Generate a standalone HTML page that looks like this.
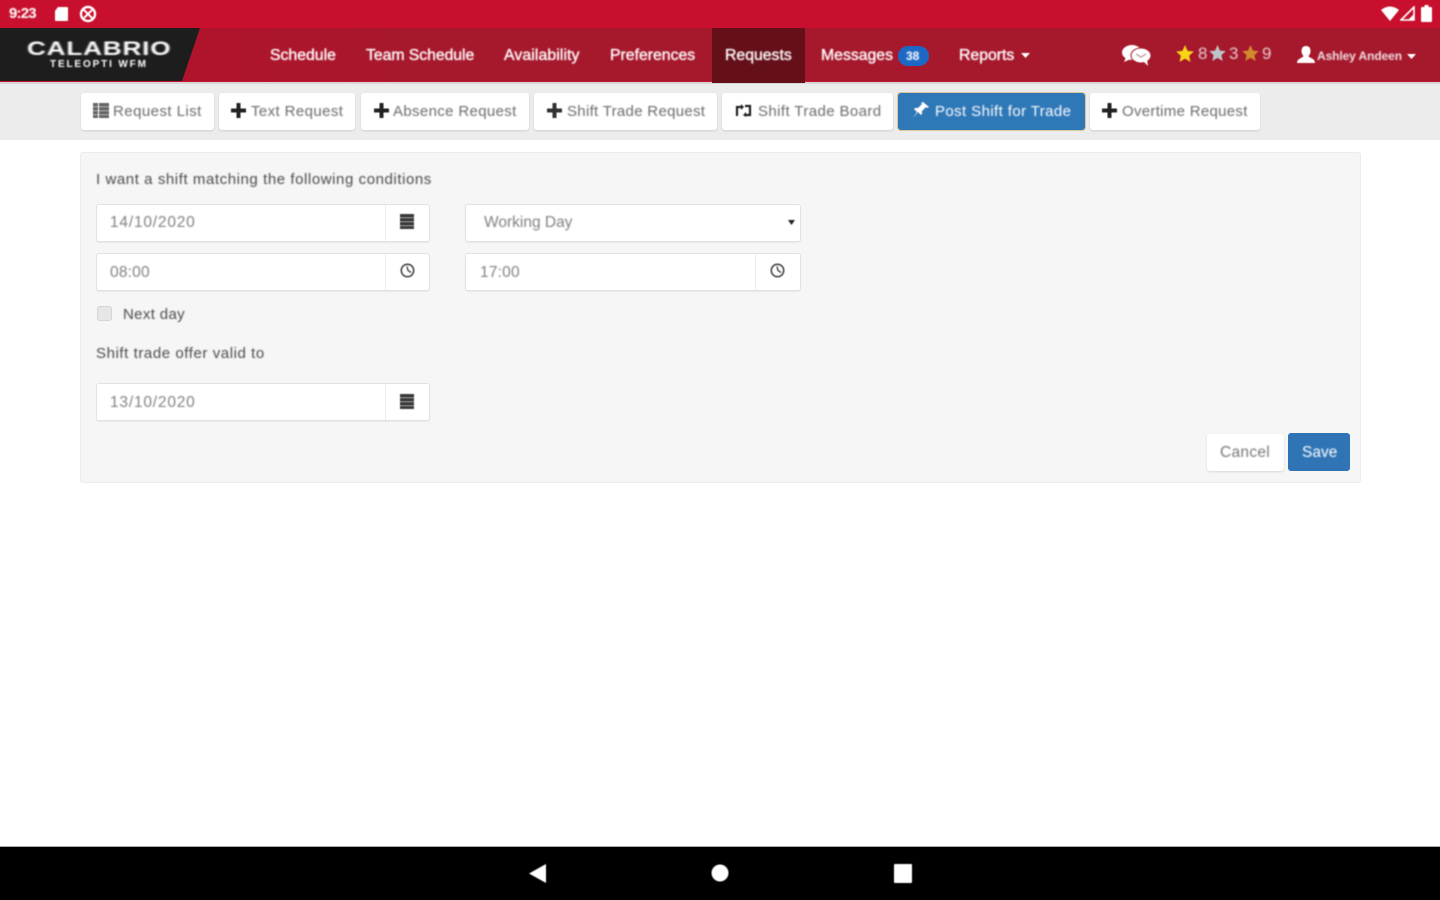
<!DOCTYPE html>
<html><head><meta charset="utf-8"><title>Post Shift for Trade</title>
<style>
html,body{margin:0;padding:0;background:#fff}
#p{position:relative;width:1440px;height:900px;overflow:hidden;font-family:"Liberation Sans",sans-serif;background:#fff}
#p div,#p span.a,#p svg{position:absolute}
.t{position:absolute;white-space:nowrap;filter:blur(.7px)}
#p svg{filter:blur(.5px)}
.nav{color:#fff;font-size:15.8px;top:46px;line-height:20px;-webkit-text-stroke:.35px #fff}
.btn{position:absolute;top:93px;height:37px;background:#fff;border-radius:3px;box-shadow:0 1px 2px rgba(0,0,0,.12)}
.bt{color:#6a6a6a;font-size:15px;top:102px;line-height:20px;letter-spacing:.3px}
.lab{color:#4a4a4a;font-size:15px;line-height:20px}
.inp{position:absolute;background:#fff;border:1px solid #e2e2e2;border-radius:3px;box-sizing:border-box;height:38px;box-shadow:0 1px 1px rgba(0,0,0,.06)}
.sep{position:absolute;top:0;bottom:0;width:1px;background:#ececec}
.v{color:#808080;font-size:15.5px;line-height:20px;letter-spacing:.2px}
.d{letter-spacing:.8px}
</style></head><body><div id="p">
<div style="left:0;top:0;width:1440px;height:28px;background:#c8102e"></div>
<div style="left:0;top:28px;width:1440px;height:53px;background:linear-gradient(90deg,#b0142d 190px,#a6182c 420px,#a6182c 100%)"></div>
<div style="left:0;top:81px;width:1440px;height:1px;background:#c8102e"></div>
<div style="left:0;top:82px;width:1440px;height:58px;background:#ececec"></div>
<div style="left:0;top:82px;width:1440px;height:2px;background:#d6d6d6"></div>

<!-- status bar -->
<span class="t" style="left:9px;top:5px;color:#fff;font-size:15px;line-height:18px;font-weight:bold;letter-spacing:-.8px">9:23</span>
<svg style="left:54px;top:6px" width="15" height="16" viewBox="0 0 15 16"><path d="M4 1h9a1 1 0 0 1 1 1v12a1 1 0 0 1-1 1H2a1 1 0 0 1-1-1V5z" fill="#fff"/></svg>
<svg style="left:79px;top:5px" width="18" height="18" viewBox="0 0 18 18"><circle cx="9" cy="9" r="7" fill="none" stroke="#fff" stroke-width="2.4"/><path d="M4 4l10 10M13 5l-8 8" stroke="#fff" stroke-width="2"/></svg>
<svg style="left:1381px;top:6px" width="18" height="15" viewBox="0 0 18 15"><path d="M0 4Q9-3 18 4L9 15z" fill="#fff"/></svg>
<svg style="left:1400px;top:6px" width="15" height="15" viewBox="0 0 15 15"><path d="M1 14L14 1v13z" fill="none" stroke="#fff" stroke-width="1.6"/><path d="M8 14L14 8v6z" fill="#fff"/></svg>
<svg style="left:1421px;top:5px" width="11" height="17" viewBox="0 0 11 17"><path d="M3.5 0h4v2H10a1 1 0 0 1 1 1v13a1 1 0 0 1-1 1H1a1 1 0 0 1-1-1V3a1 1 0 0 1 1-1h2.500z" fill="#fff"/></svg>

<!-- logo -->
<svg style="left:0;top:28px;filter:none" width="202" height="54" viewBox="0 0 202 54"><path d="M0 0H200L182 53H0z" fill="#1d1d1d"/></svg>
<span class="t" style="left:27px;top:37px;color:#fff;font-size:19.5px;line-height:24px;font-weight:bold;letter-spacing:.6px;transform-origin:0 50%;transform:scaleX(1.34)">CALABRIO</span>
<span class="t" style="left:50px;top:58px;color:#fff;font-size:10px;line-height:13px;font-weight:bold;letter-spacing:1.85px">TELEOPTI WFM</span>

<!-- nav -->
<div style="left:712px;top:28px;width:93px;height:55px;background:#651019"></div>
<span class="t nav" style="left:270px;letter-spacing:0">Schedule</span>
<span class="t nav" style="left:366px;letter-spacing:-.05px">Team Schedule</span>
<span class="t nav" style="left:504px;letter-spacing:.1px">Availability</span>
<span class="t nav" style="left:610px;letter-spacing:0">Preferences</span>
<span class="t nav" style="left:725px;letter-spacing:0">Requests</span>
<span class="t nav" style="left:821px;letter-spacing:0">Messages</span>
<div style="left:898px;top:46px;width:31px;height:20px;border-radius:10px;background:#1c68c4"></div>
<span class="t" style="left:906px;top:47px;color:#fff;font-size:12px;line-height:18px;font-weight:bold">38</span>
<span class="t nav" style="left:959px">Reports</span>
<svg style="left:1021px;top:53px" width="9" height="5" viewBox="0 0 9 5"><path d="M0 0h9L4.500 5z" fill="#fff"/></svg>

<!-- right nav -->
<svg style="left:1121px;top:44px" width="31" height="23" viewBox="0 0 31 23"><ellipse cx="11" cy="8.500" rx="10" ry="7.500" fill="#fff"/><path d="M5 13l-2 5 7-3z" fill="#fff"/><ellipse cx="20" cy="11.500" rx="10" ry="7.500" fill="#fff" stroke="#a6182c" stroke-width="1"/><path d="M22 17l5 5-1-7z" fill="#fff"/><path d="M15 10l5 3 5-3" fill="none" stroke="#c9a0a8" stroke-width="1.500"/></svg>
<svg style="left:1176px;top:45px" width="18" height="17" viewBox="0 0 24 23"><path d="M12 0l3.500 8L24 8.800l-6.400 5.700 1.900 8.500L12 18.500 4.500 23l1.900-8.500L0 8.800 8.500 8z" fill="#f7d417"/></svg>
<span class="t" style="left:1198px;top:44px;color:#e6ccd0;font-size:17px;line-height:20px">8</span>
<svg style="left:1209px;top:45px" width="17" height="16" viewBox="0 0 24 23"><path d="M12 0l3.500 8L24 8.800l-6.400 5.700 1.900 8.500L12 18.500 4.500 23l1.900-8.500L0 8.800 8.500 8z" fill="#bcc5c8"/></svg>
<span class="t" style="left:1229px;top:44px;color:#e6ccd0;font-size:17px;line-height:20px">3</span>
<svg style="left:1242px;top:45px" width="17" height="16" viewBox="0 0 24 23"><path d="M12 0l3.500 8L24 8.800l-6.400 5.700 1.900 8.500L12 18.500 4.500 23l1.900-8.500L0 8.800 8.500 8z" fill="#d08a2d"/></svg>
<span class="t" style="left:1262px;top:44px;color:#e6ccd0;font-size:17px;line-height:20px">9</span>
<svg style="left:1297px;top:46px" width="18" height="17" viewBox="0 0 18 17"><path d="M9 0c3 0 4.500 2 4.500 5S12 9 11.500 10.500C13 12 18 12.500 18 17H0c0-4.500 5-5 6.500-6.500C6 9 4.500 8 4.500 5S6 0 9 0z" fill="#fff"/></svg>
<span class="t" style="left:1317px;top:47px;color:#f0dfe2;font-size:12px;line-height:18px;font-weight:bold;letter-spacing:-.1px">Ashley Andeen</span>
<svg style="left:1407px;top:54px" width="9" height="5" viewBox="0 0 9 5"><path d="M0 0h9L4.500 5z" fill="#fff"/></svg>

<!-- subnav buttons -->
<span class="btn" style="left:81px;width:133px"></span>
<span class="btn" style="left:219px;width:136px"></span>
<span class="btn" style="left:361px;width:168px"></span>
<span class="btn" style="left:534px;width:183px"></span>
<span class="btn" style="left:722px;width:171px"></span>
<span class="btn" style="left:898px;width:187px;background:#2f78b8;box-shadow:0 0 0 1px #d8c79a"></span>
<span class="btn" style="left:1090px;width:170px"></span>

<svg style="left:93px;top:103px" width="16" height="15" viewBox="0 0 16 15"><path d="M0 0h16v3.500H0zM0 4h16v3.500H0zM0 8h16v3.500H0zM0 12h16v3H0z" fill="#666"/><path d="M5 0h1v15H5z" fill="#fff"/></svg>
<span class="t bt" style="left:113px;letter-spacing:.45px">Request List</span>
<svg style="left:231px;top:103px" width="15" height="15" viewBox="0 0 15 15"><path d="M5.500 0h4v5.500H15v4H9.500V15h-4V9.500H0v-4h5.500z" fill="#222"/></svg>
<span class="t bt" style="left:251px;letter-spacing:.4px">Text Request</span>
<svg style="left:374px;top:103px" width="15" height="15" viewBox="0 0 15 15"><path d="M5.500 0h4v5.500H15v4H9.500V15h-4V9.500H0v-4h5.500z" fill="#222"/></svg>
<span class="t bt" style="left:393px;letter-spacing:.35px">Absence Request</span>
<svg style="left:547px;top:103px" width="15" height="15" viewBox="0 0 15 15"><path d="M5.500 0h4v5.500H15v4H9.500V15h-4V9.500H0v-4h5.500z" fill="#333"/></svg>
<span class="t bt" style="left:567px;letter-spacing:.3px">Shift Trade Request</span>
<svg style="left:735px;top:104px" width="17" height="13" viewBox="0 0 17 13"><path d="M2 12V3h5M10 2h5v9h-4" fill="none" stroke="#222" stroke-width="2.2"/><path d="M6 0l3 3-3 3zM11 8l-3 3 3 2z" fill="#222"/></svg>
<span class="t bt" style="left:758px;letter-spacing:.4px">Shift Trade Board</span>
<svg style="left:912px;top:102px" width="17" height="16" viewBox="0 0 17 16"><path d="M11 0l6 5-2 1-1-1-4 4v3l-1 1-3-3-5 6 4-6-3-3 1-1h3l4-4-1-1z" fill="#fff"/></svg>
<span class="t bt" style="left:935px;color:#fff;letter-spacing:.4px">Post Shift for Trade</span>
<svg style="left:1102px;top:103px" width="15" height="15" viewBox="0 0 15 15"><path d="M5.500 0h4v5.500H15v4H9.500V15h-4V9.500H0v-4h5.500z" fill="#222"/></svg>
<span class="t bt" style="left:1122px;letter-spacing:.3px">Overtime Request</span>

<!-- panel -->
<div style="left:80px;top:152px;width:1281px;height:331px;box-sizing:border-box;background:#f6f6f6;border:1px solid #ebebeb;border-radius:3px"></div>
<span class="t lab" style="left:96px;top:170px;letter-spacing:.57px">I want a shift matching the following conditions</span>

<span class="inp" style="left:96px;top:204px;width:334px"><span class="sep" style="left:288px"></span></span>
<span class="t v d" style="left:110px;top:213px">14/10/2020</span>
<svg style="left:400px;top:214px" width="14" height="15" viewBox="0 0 14 15"><path d="M0 0h14v3.500H0zM0 4h14v3.500H0zM0 8h14v3.500H0zM0 12h14v3H0z" fill="#3a3a3a"/></svg>

<span class="inp" style="left:465px;top:204px;width:336px"></span>
<span class="t v" style="left:484px;top:213px;letter-spacing:0">Working Day</span>
<svg style="left:788px;top:220px" width="7" height="5" viewBox="0 0 7 5"><path d="M0 0h7L3.500 5z" fill="#222"/></svg>

<span class="inp" style="left:96px;top:253px;width:334px"><span class="sep" style="left:288px"></span></span>
<span class="t v" style="left:110px;top:263px">08:00</span>
<svg style="left:400px;top:263px" width="15" height="15" viewBox="0 0 15 15"><circle cx="7.500" cy="7.500" r="6.200" fill="none" stroke="#444" stroke-width="1.600"/><path d="M7 3.500L8 7.500l3 2" fill="none" stroke="#444" stroke-width="1.400"/></svg>

<span class="inp" style="left:465px;top:253px;width:336px"><span class="sep" style="left:289px"></span></span>
<span class="t v" style="left:480px;top:263px">17:00</span>
<svg style="left:770px;top:263px" width="15" height="15" viewBox="0 0 15 15"><circle cx="7.500" cy="7.500" r="6.200" fill="none" stroke="#444" stroke-width="1.600"/><path d="M7 3.500L8 7.500l3 2" fill="none" stroke="#444" stroke-width="1.400"/></svg>

<div style="left:97px;top:306px;width:15px;height:15px;box-sizing:border-box;background:#e6e6e6;border:1px solid #d4d4d4;border-radius:3px"></div>
<span class="t lab" style="left:123px;top:305px;letter-spacing:.35px">Next day</span>
<span class="t lab" style="left:96px;top:344px;letter-spacing:.57px">Shift trade offer valid to</span>

<span class="inp" style="left:96px;top:383px;width:334px"><span class="sep" style="left:288px"></span></span>
<span class="t v d" style="left:110px;top:393px">13/10/2020</span>
<svg style="left:400px;top:394px" width="14" height="15" viewBox="0 0 14 15"><path d="M0 0h14v3.500H0zM0 4h14v3.500H0zM0 8h14v3.500H0zM0 12h14v3H0z" fill="#3a3a3a"/></svg>

<div style="left:1207px;top:434px;width:77px;height:37px;background:#fff;border-radius:3px;box-shadow:0 1px 2px rgba(0,0,0,.12)"></div>
<span class="t" style="left:1220px;top:443px;color:#777;font-size:15.5px;line-height:20px;letter-spacing:.3px">Cancel</span>
<div style="left:1288px;top:433px;width:62px;height:38px;background:#2f74b5;border-radius:3px"></div>
<span class="t" style="left:1302px;top:443px;color:#fff;font-size:15.5px;line-height:20px">Save</span>

<!-- android nav -->
<div style="left:0;top:846px;width:1440px;height:1px;background:#aaa"></div>
<div style="left:0;top:847px;width:1440px;height:53px;background:#000"></div>
<svg style="left:529px;top:863px" width="18" height="21" viewBox="0 0 18 21"><path d="M17 1v19L0 10.500z" fill="#fff"/></svg>
<svg style="left:711px;top:864px" width="18" height="18" viewBox="0 0 18 18"><circle cx="9" cy="9" r="8.500" fill="#fff"/></svg>
<svg style="left:894px;top:864px" width="18" height="19" viewBox="0 0 18 19"><rect width="18" height="19" rx="1" fill="#fff"/></svg>
</div></body></html>
